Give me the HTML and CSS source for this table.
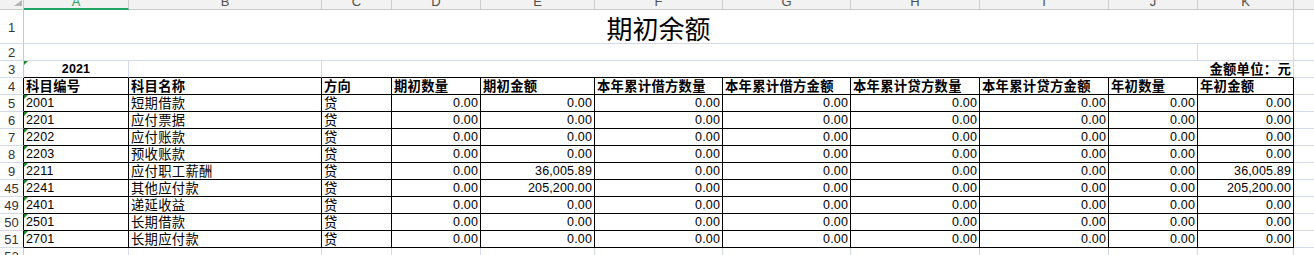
FILE: index.html
```html
<!DOCTYPE html>
<html lang="zh-CN">
<head>
<meta charset="utf-8">
<title>期初余额</title>
<link rel="stylesheet" href="styles.css">
</head>
<body>
<div class="sheet">
  <!-- column header -->
  <div class="c corner"><svg width="10" height="8" viewBox="0 0 10 8"><polygon points="10,0 10,6 2,6" fill="#b5b5b5"/></svg></div>
  <div class="c ch sel"><span>A</span></div>
  <div class="c ch"><span>B</span></div>
  <div class="c ch"><span>C</span></div>
  <div class="c ch"><span>D</span></div>
  <div class="c ch"><span>E</span></div>
  <div class="c ch"><span>F</span></div>
  <div class="c ch"><span>G</span></div>
  <div class="c ch"><span>H</span></div>
  <div class="c ch"><span>I</span></div>
  <div class="c ch"><span>J</span></div>
  <div class="c ch"><span>K</span></div>
  <div class="c ch"><span>L</span></div>

  <!-- row 1 -->
  <div class="c rh">1</div>
  <div class="c title span11">期初余额</div>
  <div class="c"></div>

  <!-- row 2 -->
  <div class="c rh">2</div>
  <div class="c span10"></div>
  <div class="c"></div>
  <div class="c"></div>

  <!-- row 3 -->
  <div class="c rh">3</div>
  <div class="c top num bold center tri">2021</div>
  <div class="c top"></div>
  <div class="c top zh bold right span9">金额单位：元</div>
  <div class="c"></div>

  <!-- row 4 -->
  <div class="c rh rt">4</div>
  <div class="c t zh bold">科目编号</div>
  <div class="c t zh bold">科目名称</div>
  <div class="c t zh bold">方向</div>
  <div class="c t zh bold">期初数量</div>
  <div class="c t zh bold">期初金额</div>
  <div class="c t zh bold">本年累计借方数量</div>
  <div class="c t zh bold">本年累计借方金额</div>
  <div class="c t zh bold">本年累计贷方数量</div>
  <div class="c t zh bold">本年累计贷方金额</div>
  <div class="c t zh bold">年初数量</div>
  <div class="c t zh bold">年初金额</div>
  <div class="c"></div>

  <!-- row 5 -->
  <div class="c rh rt">5</div>
  <div class="c t num tri">2001</div>
  <div class="c t zh">短期借款</div>
  <div class="c t zh">贷</div>
  <div class="c t num right">0.00</div>
  <div class="c t num right">0.00</div>
  <div class="c t num right">0.00</div>
  <div class="c t num right">0.00</div>
  <div class="c t num right">0.00</div>
  <div class="c t num right">0.00</div>
  <div class="c t num right">0.00</div>
  <div class="c t num right">0.00</div>
  <div class="c"></div>

  <!-- row 6 -->
  <div class="c rh rt">6</div>
  <div class="c t num tri">2201</div>
  <div class="c t zh">应付票据</div>
  <div class="c t zh">贷</div>
  <div class="c t num right">0.00</div>
  <div class="c t num right">0.00</div>
  <div class="c t num right">0.00</div>
  <div class="c t num right">0.00</div>
  <div class="c t num right">0.00</div>
  <div class="c t num right">0.00</div>
  <div class="c t num right">0.00</div>
  <div class="c t num right">0.00</div>
  <div class="c"></div>

  <!-- row 7 -->
  <div class="c rh rt">7</div>
  <div class="c t num tri">2202</div>
  <div class="c t zh">应付账款</div>
  <div class="c t zh">贷</div>
  <div class="c t num right">0.00</div>
  <div class="c t num right">0.00</div>
  <div class="c t num right">0.00</div>
  <div class="c t num right">0.00</div>
  <div class="c t num right">0.00</div>
  <div class="c t num right">0.00</div>
  <div class="c t num right">0.00</div>
  <div class="c t num right">0.00</div>
  <div class="c"></div>

  <!-- row 8 -->
  <div class="c rh rt">8</div>
  <div class="c t num tri">2203</div>
  <div class="c t zh">预收账款</div>
  <div class="c t zh">贷</div>
  <div class="c t num right">0.00</div>
  <div class="c t num right">0.00</div>
  <div class="c t num right">0.00</div>
  <div class="c t num right">0.00</div>
  <div class="c t num right">0.00</div>
  <div class="c t num right">0.00</div>
  <div class="c t num right">0.00</div>
  <div class="c t num right">0.00</div>
  <div class="c"></div>

  <!-- row 9 -->
  <div class="c rh rt">9</div>
  <div class="c t num tri">2211</div>
  <div class="c t zh">应付职工薪酬</div>
  <div class="c t zh">贷</div>
  <div class="c t num right">0.00</div>
  <div class="c t num right">36,005.89</div>
  <div class="c t num right">0.00</div>
  <div class="c t num right">0.00</div>
  <div class="c t num right">0.00</div>
  <div class="c t num right">0.00</div>
  <div class="c t num right">0.00</div>
  <div class="c t num right">36,005.89</div>
  <div class="c"></div>

  <!-- row 45 -->
  <div class="c rh rt">45</div>
  <div class="c t num tri">2241</div>
  <div class="c t zh">其他应付款</div>
  <div class="c t zh">贷</div>
  <div class="c t num right">0.00</div>
  <div class="c t num right">205,200.00</div>
  <div class="c t num right">0.00</div>
  <div class="c t num right">0.00</div>
  <div class="c t num right">0.00</div>
  <div class="c t num right">0.00</div>
  <div class="c t num right">0.00</div>
  <div class="c t num right">205,200.00</div>
  <div class="c"></div>

  <!-- row 49 -->
  <div class="c rh rt">49</div>
  <div class="c t num tri">2401</div>
  <div class="c t zh">递延收益</div>
  <div class="c t zh">贷</div>
  <div class="c t num right">0.00</div>
  <div class="c t num right">0.00</div>
  <div class="c t num right">0.00</div>
  <div class="c t num right">0.00</div>
  <div class="c t num right">0.00</div>
  <div class="c t num right">0.00</div>
  <div class="c t num right">0.00</div>
  <div class="c t num right">0.00</div>
  <div class="c"></div>

  <!-- row 50 -->
  <div class="c rh rt">50</div>
  <div class="c t num tri">2501</div>
  <div class="c t zh">长期借款</div>
  <div class="c t zh">贷</div>
  <div class="c t num right">0.00</div>
  <div class="c t num right">0.00</div>
  <div class="c t num right">0.00</div>
  <div class="c t num right">0.00</div>
  <div class="c t num right">0.00</div>
  <div class="c t num right">0.00</div>
  <div class="c t num right">0.00</div>
  <div class="c t num right">0.00</div>
  <div class="c"></div>

  <!-- row 51 -->
  <div class="c rh rt">51</div>
  <div class="c t num tri">2701</div>
  <div class="c t zh">长期应付款</div>
  <div class="c t zh">贷</div>
  <div class="c t num right">0.00</div>
  <div class="c t num right">0.00</div>
  <div class="c t num right">0.00</div>
  <div class="c t num right">0.00</div>
  <div class="c t num right">0.00</div>
  <div class="c t num right">0.00</div>
  <div class="c t num right">0.00</div>
  <div class="c t num right">0.00</div>
  <div class="c"></div>

  <!-- row 52 -->
  <div class="c rh">52</div>
  <div class="c"></div>
  <div class="c"></div>
  <div class="c"></div>
  <div class="c"></div>
  <div class="c"></div>
  <div class="c"></div>
  <div class="c"></div>
  <div class="c"></div>
  <div class="c"></div>
  <div class="c"></div>
  <div class="c"></div>
  <div class="c"></div>
</div>
</body>
</html>
```

FILE: styles.css
```css
html, body {
  margin: 0;
  padding: 0;
  background: #ffffff;
  overflow: hidden;
}

.sheet {
  display: grid;
  grid-template-columns: 24px 105px 193px 70px 89px 114px 128px 128px 129px 129px 89px 96px 72px;
  grid-template-rows: 10px 34px repeat(13, 17px);
  width: max-content;
  color: #000;
}

.c {
  box-sizing: border-box;
  border-right: 1px solid #d3d9e6;
  border-bottom: 1px solid #d3d9e6;
  white-space: nowrap;
  display: flex;
  align-items: flex-end;
  padding: 0 2px;
  position: relative;
}

/* column header */
.corner {
  background: #f2f2f2;
  border-right: 1px solid #c9c9c9;
  border-bottom: 1px solid #c9c9c9;
  justify-content: flex-end;
  align-items: flex-start;
  padding: 0 1px;
  overflow: hidden;
}

.ch {
  background: #f2f2f2;
  border-right: 1px solid #cdcdcd;
  border-bottom: 1px solid #c9c9c9;
  justify-content: center;
  color: #505050;
  font-family: "Liberation Sans", Arial, sans-serif;
  font-size: 13px;
  overflow: hidden;
}

.ch span {
  line-height: 14px;
}

.ch.sel {
  color: #21a366;
  border-bottom: 2px solid #21a366;
}

.ch.sel span {
  margin-bottom: -1px;
}

/* row header */
.rh {
  background: #ffffff;
  border-right: 1px solid #c9c9c9;
  border-bottom: 1px solid #d3d9e6;
  justify-content: center;
  align-items: center;
  color: #333;
  font-family: "Liberation Sans", Arial, sans-serif;
  font-size: 13px;
  line-height: 13px;
  padding: 1px 0 0 0;
}

.rh.rt {
  border-right-color: #000;
}

/* merged spans */
.span11 { grid-column: span 11; }
.span10 { grid-column: span 10; }
.span9 { grid-column: span 9; }

/* table cells */
.t {
  border-right-color: #000;
  border-bottom-color: #000;
}

.top {
  border-bottom-color: #000;
}

.num {
  font-family: "Liberation Sans", Arial, sans-serif;
  font-size: 12.5px;
  line-height: 13px;
  padding-bottom: 1px;
  letter-spacing: 0.15px;
}

.zh {
  font-family: "Noto Sans CJK SC", "Liberation Sans", sans-serif;
  font-size: 13.3px;
  line-height: 13px;
  padding-bottom: 2px;
  letter-spacing: 0.3px;
}

.bold { font-weight: bold; }

.right { justify-content: flex-end; }
.center { justify-content: center; }

.title {
  justify-content: center;
  align-items: center;
  font-family: "Noto Sans CJK SC", sans-serif;
  font-size: 26px;
  line-height: 30px;
  padding-top: 2px;
}

/* green triangle marker (text-formatted number) */
.tri::before {
  content: "";
  position: absolute;
  left: 0;
  top: 0;
  border-top: 4px solid #1b8a2a;
  border-right: 4px solid transparent;
}
```
